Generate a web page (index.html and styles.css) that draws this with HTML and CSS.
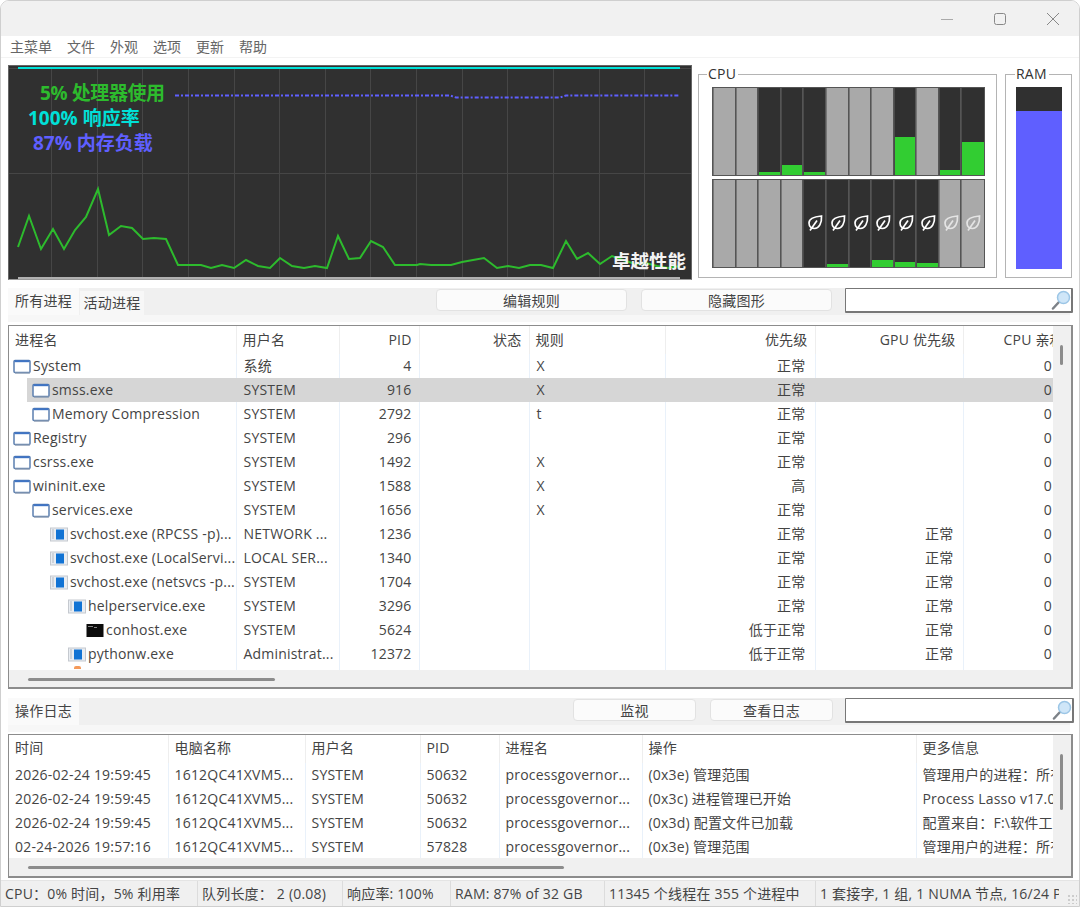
FILE: index.html
```html
<!DOCTYPE html>
<html lang="zh-CN">
<head>
    <meta charset="UTF-8">
    <title>Process Lasso</title>
    <link rel="stylesheet" href="styles.css">
</head>
<body>
    <svg class="defs" width="0" height="0">
        <symbol id="leaf" viewBox="0 0 16 16">
            <path d="M14.500 1C9 1.500 2 2.500 2 8c0 3.500 2.500 5.500 5.500 5.500C12 13.500 15 8 14.500 1z" fill="none" stroke="currentColor" stroke-width="1.700"/>
            <path d="M3 15.500 10 5.500" fill="none" stroke="currentColor" stroke-width="1.700"/>
        </symbol>
        <symbol id="win" viewBox="0 0 18 15">
            <rect x="1" y="1.500" width="16" height="12" rx="1" fill="#fff" stroke="#5b7fb0" stroke-width="1.500"/>
            <path d="M1.500 2.200h15" stroke="#3f74c4" stroke-width="2"/>
            <path d="M2 14h15" stroke="#8a9ab0" stroke-width="1.200"/>
        </symbol>
        <symbol id="svc" viewBox="0 0 18 15">
            <rect x=".5" y="1" width="17" height="13" fill="#e9edf2" stroke="#c5c9cf"/>
            <path d="M2 3h2M2 5h2M2 7h2M2 9h2M2 11h2" stroke="#b4bac2"/>
            <rect x="6" y="2.500" width="8" height="10" fill="#1173d4"/>
        </symbol>
        <symbol id="con" viewBox="0 0 18 15">
            <rect x=".5" y="1" width="17" height="13" fill="#0c0c0c"/>
            <path d="M2 3.500h5M8 4.500h3" stroke="#888"/>
        </symbol>
        <symbol id="lens" viewBox="0 0 20 20">
            <path d="M2 18.500 8 12" stroke="#7d8288" stroke-width="2.500" stroke-linecap="round"/>
            <circle cx="12.500" cy="7.500" r="6" fill="#cfe6f8" stroke="#9cc6e6" stroke-width="1.500"/>
        </symbol>
    </svg>

    <div class="window">
        <div class="titlebar">
            <span class="win-btn"><svg width="14" height="14"><path d="M1 7.500h12" stroke="#aaa"/></svg></span>
            <span class="win-btn"><svg width="14" height="14"><rect x="1.500" y="1.500" width="11" height="11" rx="2" fill="none" stroke="#888"/></svg></span>
            <span class="win-btn"><svg width="14" height="14"><path d="M1 1l12 12M13 1 1 13" stroke="#888"/></svg></span>
        </div>
        <div class="menu">
            <span>主菜单</span><span>文件</span><span>外观</span><span>选项</span><span>更新</span><span>帮助</span>
        </div>

        <div class="monitors">
            <div class="graph">
                <svg class="graph-svg" width="684" height="215" viewBox="8 65 684 215">
                    <path class="grid" d="M8 68.500h684M8 173.500h684M51.500 68v210M97.500 68v210M142.500 68v210M188.500 68v210M234.500 68v210M279.500 68v210M325.500 68v210M370.500 68v210M416.500 68v210M462.500 68v210M507.500 68v210M553.500 68v210M599.500 68v210M644.500 68v210"/>
                    <path d="M18 278h662" stroke="#b0b0b0" stroke-width="2"/>
                    <path d="M18 68h662" stroke="#00e0d8" stroke-width="2"/>
                    <polyline class="ram-line" points="175,95.500 450,95.500 456,97.500 560,97.500 566,95.500 680,95.500"/>
                    <polyline class="cpu-line" points="18,247 29,216 41,249 53,229 64,249 75,230 86,217 98,189 109,235 121,226 132,228 143,239 154,238 166,239 178,265 189,265 201,265 211,268 222,265 234,268 246,260 258,266 270,268 280,258 292,266 304,268 315,266 327,268 338,236 349,259 360,258 371,241 383,247 395,265 406,265 417,265 420,264 431,265 451,265 462,262 473,260 484,258 497,268 508,266 519,268 530,265 541,265 553,268 566,241 577,259 588,253 600,264 612,256 623,260 635,264 646,263 657,266 668,268 680,266"/>
                </svg>
                <div class="legend">
                    <div class="legend-cpu">5% 处理器使用</div>
                    <div class="legend-resp">100% 响应率</div>
                    <div class="legend-ram">87% 内存负载</div>
                </div>
                <div class="mode">卓越性能</div>
            </div>

            <fieldset class="group cpu-group">
                <legend>CPU</legend>
                <div class="cores">
                    <div class="core parked"></div>
                    <div class="core parked"></div>
                    <div class="core"><i class="load" style="height:3px"></i></div>
                    <div class="core"><i class="load" style="height:10px"></i></div>
                    <div class="core"><i class="load" style="height:3px"></i></div>
                    <div class="core parked"></div>
                    <div class="core parked"></div>
                    <div class="core parked"></div>
                    <div class="core"><i class="load" style="height:38px"></i></div>
                    <div class="core parked"></div>
                    <div class="core"><i class="load" style="height:5px"></i></div>
                    <div class="core"><i class="load" style="height:33px"></i></div>
                </div>
                <div class="cores">
                    <div class="core parked"></div>
                    <div class="core parked"></div>
                    <div class="core parked"></div>
                    <div class="core parked"></div>
                    <div class="core"><svg class="leaf"><use href="#leaf"/></svg></div>
                    <div class="core"><svg class="leaf"><use href="#leaf"/></svg><i class="load" style="height:3px"></i></div>
                    <div class="core"><svg class="leaf"><use href="#leaf"/></svg></div>
                    <div class="core"><svg class="leaf"><use href="#leaf"/></svg><i class="load" style="height:7px"></i></div>
                    <div class="core"><svg class="leaf"><use href="#leaf"/></svg><i class="load" style="height:5px"></i></div>
                    <div class="core"><svg class="leaf"><use href="#leaf"/></svg><i class="load" style="height:4px"></i></div>
                    <div class="core parked"><svg class="leaf"><use href="#leaf"/></svg></div>
                    <div class="core parked"><svg class="leaf"><use href="#leaf"/></svg></div>
                </div>
            </fieldset>

            <fieldset class="group ram-group">
                <legend>RAM</legend>
                <div class="ram-bar"><i class="ram-fill" style="height:87%"></i></div>
            </fieldset>
        </div>

        <div class="toolstrip">
            <div class="tabs">
                <span class="tab active">所有进程</span>
                <span class="tab">活动进程</span>
            </div>
            <button class="btn btn-wide btn-first">编辑规则</button>
            <button class="btn btn-wide">隐藏图形</button>
            <div class="search"><svg class="lens"><use href="#lens"/></svg></div>
        </div>

        <div class="listbox proc-box">
            <div class="list-view">
                <table class="proc-table">
                    <colgroup>
                        <col class="c-name"><col class="c-user"><col class="c-pid"><col class="c-state"><col class="c-rule"><col class="c-prio"><col class="c-gpu"><col class="c-aff">
                    </colgroup>
                    <thead>
                        <tr><th>进程名</th><th>用户名</th><th class="r">PID</th><th class="r">状态</th><th>规则</th><th class="r">优先级</th><th class="r">GPU 优先级</th><th class="aff-head">CPU 亲和性</th></tr>
                    </thead>
                    <tbody>
                        <tr><td class="d0"><svg class="ico"><use href="#win"/></svg>System</td><td>系统</td><td class="r">4</td><td></td><td>X</td><td class="r">正常</td><td></td><td class="r aff">0</td></tr>
                        <tr class="selected"><td class="d1"><svg class="ico"><use href="#win"/></svg>smss.exe</td><td>SYSTEM</td><td class="r">916</td><td></td><td>X</td><td class="r">正常</td><td></td><td class="r aff">0</td></tr>
                        <tr><td class="d1"><svg class="ico"><use href="#win"/></svg>Memory Compression</td><td>SYSTEM</td><td class="r">2792</td><td></td><td>t</td><td class="r">正常</td><td></td><td class="r aff">0</td></tr>
                        <tr><td class="d0"><svg class="ico"><use href="#win"/></svg>Registry</td><td>SYSTEM</td><td class="r">296</td><td></td><td></td><td class="r">正常</td><td></td><td class="r aff">0</td></tr>
                        <tr><td class="d0"><svg class="ico"><use href="#win"/></svg>csrss.exe</td><td>SYSTEM</td><td class="r">1492</td><td></td><td>X</td><td class="r">正常</td><td></td><td class="r aff">0</td></tr>
                        <tr><td class="d0"><svg class="ico"><use href="#win"/></svg>wininit.exe</td><td>SYSTEM</td><td class="r">1588</td><td></td><td>X</td><td class="r">高</td><td></td><td class="r aff">0</td></tr>
                        <tr><td class="d1"><svg class="ico"><use href="#win"/></svg>services.exe</td><td>SYSTEM</td><td class="r">1656</td><td></td><td>X</td><td class="r">正常</td><td></td><td class="r aff">0</td></tr>
                        <tr><td class="d2"><svg class="ico"><use href="#svc"/></svg>svchost.exe (RPCSS -p)...</td><td>NETWORK ...</td><td class="r">1236</td><td></td><td></td><td class="r">正常</td><td class="r">正常</td><td class="r aff">0</td></tr>
                        <tr><td class="d2"><svg class="ico"><use href="#svc"/></svg>svchost.exe (LocalServi...</td><td>LOCAL SER...</td><td class="r">1340</td><td></td><td></td><td class="r">正常</td><td class="r">正常</td><td class="r aff">0</td></tr>
                        <tr><td class="d2"><svg class="ico"><use href="#svc"/></svg>svchost.exe (netsvcs -p...</td><td>SYSTEM</td><td class="r">1704</td><td></td><td></td><td class="r">正常</td><td class="r">正常</td><td class="r aff">0</td></tr>
                        <tr><td class="d3"><svg class="ico"><use href="#svc"/></svg>helperservice.exe</td><td>SYSTEM</td><td class="r">3296</td><td></td><td></td><td class="r">正常</td><td class="r">正常</td><td class="r aff">0</td></tr>
                        <tr><td class="d4"><svg class="ico"><use href="#con"/></svg>conhost.exe</td><td>SYSTEM</td><td class="r">5624</td><td></td><td></td><td class="r">低于正常</td><td class="r">正常</td><td class="r aff">0</td></tr>
                        <tr><td class="d3"><svg class="ico"><use href="#svc"/></svg>pythonw.exe</td><td>Administrat...</td><td class="r">12372</td><td></td><td></td><td class="r">低于正常</td><td class="r">正常</td><td class="r aff">0</td></tr>
                        <tr class="next-row"><td class="d3"><i class="next-ico"></i></td><td></td><td></td><td></td><td></td><td></td><td></td><td></td></tr>
                    </tbody>
                </table>
            </div>
            <div class="vscroll"><i class="vthumb proc-vthumb"></i></div>
            <div class="hscroll"><i class="hthumb proc-hthumb"></i></div>
        </div>

        <div class="toolstrip log-strip">
            <div class="tabs">
                <span class="tab active">操作日志</span>
            </div>
            <button class="btn btn-narrow btn-first-log">监视</button>
            <button class="btn btn-narrow">查看日志</button>
            <div class="search"><svg class="lens"><use href="#lens"/></svg></div>
        </div>

        <div class="listbox log-box">
            <div class="list-view">
                <table class="log-table">
                    <colgroup>
                        <col class="l-time"><col class="l-pc"><col class="l-user"><col class="l-pid"><col class="l-name"><col class="l-op"><col class="l-info">
                    </colgroup>
                    <thead>
                        <tr><th>时间</th><th>电脑名称</th><th>用户名</th><th>PID</th><th>进程名</th><th>操作</th><th>更多信息</th></tr>
                    </thead>
                    <tbody>
                        <tr><td>2026-02-24 19:59:45</td><td>1612QC41XVM5...</td><td>SYSTEM</td><td>50632</td><td>processgovernor...</td><td>(0x3e) 管理范围</td><td>管理用户的进程：所有用户</td></tr>
                        <tr><td>2026-02-24 19:59:45</td><td>1612QC41XVM5...</td><td>SYSTEM</td><td>50632</td><td>processgovernor...</td><td>(0x3c) 进程管理已开始</td><td>Process Lasso v17.0</td></tr>
                        <tr><td>2026-02-24 19:59:45</td><td>1612QC41XVM5...</td><td>SYSTEM</td><td>50632</td><td>processgovernor...</td><td>(0x3d) 配置文件已加载</td><td>配置来自：F:\软件工具</td></tr>
                        <tr><td>02-24-2026 19:57:16</td><td>1612QC41XVM5...</td><td>SYSTEM</td><td>57828</td><td>processgovernor...</td><td>(0x3e) 管理范围</td><td>管理用户的进程：所有用户</td></tr>
                    </tbody>
                </table>
            </div>
            <div class="vscroll"><i class="vthumb log-vthumb"></i></div>
            <div class="hscroll"><i class="hthumb log-hthumb"></i></div>
        </div>

        <div class="statusbar">
            <span class="st-cpu">CPU：0% 时间，5% 利用率</span>
            <span class="st-queue">队列长度： 2 (0.08)</span>
            <span class="st-resp">响应率: 100%</span>
            <span class="st-ram">RAM: 87% of 32 GB</span>
            <span class="st-thr">11345 个线程在 355 个进程中</span>
            <span class="st-numa">1 套接字, 1 组, 1 NUMA 节点, 16/24 P 核心</span>
            <i class="grip"></i>
        </div>
    </div>
</body>
</html>
```

FILE: styles.css
```css
* {
    box-sizing: border-box;
}

body {
    margin: 0;
    width: 1080px;
    height: 907px;
    overflow: hidden;
    background: #fff;
    font-family: "Open Sans", "Noto Sans CJK SC", sans-serif;
    font-size: 14px;
    letter-spacing: .2px;
    color: #444;
}

.defs {
    position: absolute;
}

.window {
    width: 1080px;
    height: 907px;
    display: flex;
    flex-direction: column;
    border: 1px solid #cfcfcf;
    border-radius: 9px 9px 0 0;
    overflow: hidden;
    background: #fff;
}

/* Title bar and menu */
.titlebar {
    height: 35px;
    flex: none;
    display: flex;
    justify-content: flex-end;
    align-items: center;
    background: #f1f1f1;
}

.win-btn {
    width: 53px;
    height: 14px;
    display: flex;
    justify-content: center;
}

.menu {
    height: 22px;
    flex: none;
    display: flex;
    gap: 15px;
    align-items: center;
    padding-left: 9px;
    border-bottom: 1px solid #f3f3f3;
    line-height: 22px;
    font-size: 14px;
    letter-spacing: 0;
    color: #666;
}

/* Graphs */
.monitors {
    height: 221px;
    flex: none;
    display: flex;
    padding: 7px 0 0 7px;
}

.graph {
    position: relative;
    width: 684px;
    height: 215px;
    flex: none;
    background: #303030;
    border: 1px solid #666;
    border-bottom-color: #999;
    overflow: hidden;
}

.graph-svg {
    display: block;
    margin: -1px;
}

.grid {
    stroke: #464646;
    stroke-width: 1;
    fill: none;
}

.cpu-line {
    fill: none;
    stroke: #2dbb2d;
    stroke-width: 2;
}

.ram-line {
    fill: none;
    stroke: #5f5fff;
    stroke-width: 2;
    stroke-dasharray: 4 2 2 2;
}

.legend {
    position: absolute;
    left: 0;
    top: 15px;
    font-size: 19px;
    font-weight: 700;
    letter-spacing: 0;
    line-height: 25px;
    white-space: nowrap;
}

.legend-cpu {
    margin-left: 31px;
    letter-spacing: -.4px;
    color: #2dbb2d;
}

.legend-resp {
    margin-left: 19px;
    color: #00e0d8;
}

.legend-ram {
    margin-left: 24px;
    color: #5f5fff;
}

.mode {
    position: absolute;
    right: 5px;
    bottom: 6px;
    font-size: 18.500px;
    font-weight: 700;
    letter-spacing: 0;
    line-height: 24px;
    color: #f4f4f4;
}

.group {
    height: 212px;
    margin: 1px 0 0;
    padding: 0;
    border: 1px solid #b4b4b4;
    min-width: 0;
    flex: none;
}

.group legend {
    padding: 0 2px 0 1px;
    font-size: 14px;
    line-height: 16px;
    color: #333;
}

.cpu-group {
    width: 299px;
    margin-left: 6px;
    padding: 5px 0 0 13px;
}

.cpu-group legend {
    margin-left: -5px;
}

.ram-group {
    width: 67px;
    margin-left: 8px;
    padding: 5px 0 0 10px;
}

.ram-group legend {
    margin-left: -1px;
}

.cores {
    width: 273px;
    height: 89px;
    margin-bottom: 3px;
    display: grid;
    grid-template-columns: repeat(12, 1fr);
    gap: 0;
    background: #555;
    border: 1px solid #555;
}

.core {
    position: relative;
    margin-right: 1px;
    background: #303030;
    border-left: 1px solid #4a4a4a;
    color: #fff;
}

.core:last-child {
    margin-right: 0;
}

.core.parked {
    background: #a9a9a9;
    border-left-color: #777;
    color: #e4e4e4;
}

.load {
    position: absolute;
    left: 0;
    right: 0;
    bottom: 0;
    background: #32cd32;
}

.leaf {
    position: absolute;
    left: 3px;
    top: 35px;
    width: 16px;
    height: 16px;
}

.ram-bar {
    position: relative;
    width: 46px;
    height: 182px;
    background: #303030;
}

.ram-fill {
    position: absolute;
    left: 0;
    right: 0;
    bottom: 0;
    background: #5f5fff;
}

/* Tab strips with buttons and search */
.toolstrip {
    height: 34px;
    flex: none;
    margin: 9px 9px 0 7px;
    display: flex;
    align-items: flex-start;
    background: #f0f0f0;
    border-bottom: 7px solid #f7f7f7;
}

.log-strip {
    margin-top: 9px;
}

.tabs {
    display: flex;
    align-items: flex-end;
    height: 27px;
    flex: none;
}

.tab {
    height: 24px;
    width: 64px;
    margin-left: 1px;
    text-align: center;
    line-height: 24px;
    background: #f7f7f7;
    color: #444;
}

.tab.active {
    width: 71px;
    height: 27px;
    margin-left: 0;
    line-height: 25px;
    background: #fafafa;
}

.btn {
    height: 22px;
    flex: none;
    margin: 1px 0 0;
    padding: 0;
    border: 1px solid #e2e2e2;
    border-radius: 4px;
    background: #fbfbfb;
    font: inherit;
    letter-spacing: inherit;
    line-height: 19px;
    color: #444;
}

.btn-wide {
    width: 191px;
    margin-right: 14px;
}

.btn-first {
    margin-left: 292px;
}

.btn-narrow {
    width: 123px;
    margin-right: 14px;
}

.btn-first-log {
    margin-left: 494px;
}

.search {
    position: relative;
    width: 228px;
    height: 25px;
    flex: none;
    margin-left: -1px;
    background: #fff;
    border: 2px solid #777;
    border-top-width: 1px;
    border-left-width: 1px;
    border-radius: 1px;
}

.log-strip .search {
    width: 229px;
    margin-left: -2px;
}

.lens {
    position: absolute;
    right: 0;
    top: 1px;
    width: 20px;
    height: 20px;
}

/* Lists */
.listbox {
    position: relative;
    flex: none;
    margin: 3px 6px 0 7px;
    border: 2px solid #8c8c8c;
    border-top-width: 1px;
    border-left-width: 1px;
    background: #f0f0f0;
}

.proc-box {
    height: 364px;
}

.log-box {
    height: 144px;
    margin-top: 2px;
}

.list-view {
    width: 1044px;
    overflow: hidden;
    background: #fff;
}

.proc-box .list-view {
    height: 344px;
}

.log-box .list-view {
    height: 123px;
}

table {
    table-layout: fixed;
    border-collapse: collapse;
    white-space: nowrap;
}

th {
    height: 28px;
    padding: 0 7px 2px 6px;
    font-weight: 400;
    text-align: left;
    border-right: 1px solid #eee;
    overflow: hidden;
}

td {
    height: 24px;
    padding: 0 7px 2px 7px;
    overflow: hidden;
    border-right: 1px solid #e9f1fa;
}

th.r,
td.r {
    text-align: right;
}

.proc-table td:nth-child(6),
.proc-table td:nth-child(7) {
    padding-right: 9px;
}

.c-name { width: 227px; }
.c-user { width: 103px; }
.c-pid { width: 80px; }
.c-state { width: 110px; }
.c-rule { width: 136px; }
.c-prio { width: 150px; }
.c-gpu { width: 148px; }
.c-aff { width: 90px; }

.proc-table {
    width: 1044px;
}

th.aff-head {
    padding-left: 40px;
    border-right: 0;
}

td.aff {
    padding-right: 1px;
    border-right: 0;
}

.selected td {
    background: #d6d6d6;
    border-right-color: #d6d6d6;
}

.d0 { padding-left: 4px; }
.d1 { padding-left: 23px; }
.d2 { padding-left: 41px; }
.d3 { padding-left: 59px; }
.d4 { padding-left: 77px; }

.selected .d1 {
    background: linear-gradient(90deg, #fff 18px, #d6d6d6 18px);
}

.ico {
    width: 18px;
    height: 15px;
    margin-right: 2px;
    vertical-align: -3px;
}

.next-row td {
    vertical-align: top;
}

.next-ico {
    display: block;
    width: 7px;
    height: 3px;
    margin-left: 6px;
    border-radius: 2px 2px 0 0;
    background: #f59a5a;
}

.vscroll {
    position: absolute;
    right: 8px;
    top: 0;
    bottom: 0;
}

.vthumb {
    display: block;
    width: 3px;
    border-radius: 2px;
    background: #8c8c8c;
}

.proc-vthumb {
    height: 20px;
    margin-top: 19px;
}

.log-vthumb {
    height: 56px;
    margin-top: 19px;
}

.hscroll {
    padding: 8px 0 0 19px;
}

.hthumb {
    display: block;
    height: 3px;
    border-radius: 2px;
    background: #8c8c8c;
}

.proc-hthumb {
    width: 247px;
}

.log-hthumb {
    width: 536px;
}

.log-table {
    width: 1044px;
}

.log-table th {
    padding-bottom: 4px;
}

.log-table td {
    padding-left: 6px;
}

.l-time { width: 159px; }
.l-pc { width: 137px; }
.l-user { width: 115px; }
.l-pid { width: 79px; }
.l-name { width: 143px; }
.l-op { width: 274px; }
.l-info { width: 137px; }

/* Status bar */
.statusbar {
    position: relative;
    flex: 1;
    margin-top: 2px;
    display: flex;
    align-items: center;
    background: #f0f0f0;
    border-top: 1px solid #e4e4e4;
    white-space: nowrap;
    overflow: hidden;
    color: #444;
}

.statusbar span {
    height: 100%;
    padding-left: 4px;
    line-height: 26px;
    border-right: 1px solid #dcdcdc;
    overflow: hidden;
    flex: none;
}

.st-cpu { width: 197px; }
.st-queue { width: 145px; }
.st-resp { width: 108px; }
.st-ram { width: 154px; }
.st-thr { width: 211px; }
.statusbar .st-numa { width: 243px; border-right: 0; }

.grip {
    position: absolute;
    right: 2px;
    bottom: 2px;
    width: 10px;
    height: 10px;
    background: radial-gradient(circle, #ccc 1px, transparent 1.2px) 0 0 / 4px 4px;
}
```
